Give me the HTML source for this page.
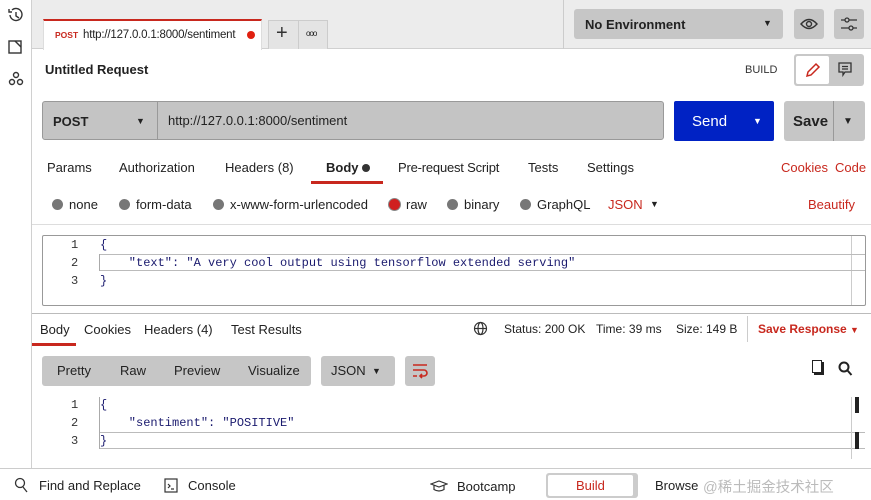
<!DOCTYPE html>
<html><head><style>
*{box-sizing:border-box;margin:0;padding:0}
body{width:871px;height:500px;overflow:hidden;background:#fff;font-family:"Liberation Sans","Noto Sans CJK SC",sans-serif;font-size:13px;color:#222;position:relative}
.a{position:absolute;white-space:nowrap}
.g{background:#c6c6c6;border-radius:3px}
.mono{font-family:"Liberation Mono",monospace;font-size:12px;color:#1a1a6e}
.red{color:#c8281e}
.rd{display:inline-block;width:11px;height:11px;border-radius:50%;background:#777;vertical-align:-1px;margin-right:6px}
</style></head><body>
<!-- top bar -->
<div class="a" style="left:32px;top:0;width:839px;height:49px;background:#ececec;border-bottom:1px solid #d0d0d0"></div>
<div class="a" style="left:0;top:0;width:32px;height:500px;border-right:1px solid #d0d0d0;background:#fff"></div>
<svg class="a" style="left:6px;top:6px" width="20" height="84" viewBox="0 0 20 84" fill="none" stroke="#333" stroke-width="1.4">
<path d="M4 9a6 6 0 1 0 2-5M3 3v3h3M10 6v4l3 2"/>
<rect x="3" y="35" width="12" height="12"/><path d="M9 35v0l6 6"/>
<circle cx="10" cy="69" r="2.5"/><circle cx="6" cy="76" r="2.5"/><circle cx="14" cy="76" r="2.5"/>
</svg>
<div class="a" style="left:43px;top:19px;width:219px;height:31px;background:#fff;border-top:2px solid #c8281e;border-left:1px solid #ddd;border-right:1px solid #ddd"></div>
<div class="a" style="left:55px;top:30px;font-size:8.5px;font-weight:bold;color:#c8281e">POST</div>
<div class="a" style="left:83px;top:29px;font-size:11.5px;letter-spacing:-0.2px">http://127.0.0.1:8000/sentiment</div>
<div class="a" style="left:247px;top:31px;width:8px;height:8px;border-radius:50%;background:#e02010"></div>
<div class="a" style="left:268px;top:20px;width:60px;height:29px;background:#e4e4e4;border:1px solid #ccc;border-bottom:none"></div>
<div class="a" style="left:298px;top:20px;width:1px;height:29px;background:#ccc"></div>
<div class="a" style="left:276px;top:22px;font-size:20px;color:#333">+</div>
<div class="a" style="left:306px;top:29px;font-size:8px;letter-spacing:-1px">ooo</div>
<div class="a" style="left:563px;top:0;width:1px;height:49px;background:#ccc"></div>
<div class="a g" style="left:574px;top:9px;width:209px;height:30px"></div>
<div class="a" style="left:585px;top:17px;font-weight:bold">No Environment</div>
<div class="a" style="left:763px;top:18px;font-size:9px">▼</div>
<div class="a g" style="left:794px;top:9px;width:30px;height:30px"></div>
<svg class="a" style="left:799px;top:15px" width="20" height="18" fill="none" stroke="#333" stroke-width="1.4"><path d="M2 9q8-9 16 0q-8 9-16 0z"/><circle cx="10" cy="9" r="2.5"/></svg>
<div class="a g" style="left:834px;top:9px;width:30px;height:30px"></div>
<svg class="a" style="left:839px;top:14px" width="20" height="20" fill="none" stroke="#333" stroke-width="1.3"><path d="M2 6h16M2 14h16"/><circle cx="8" cy="6" r="2" fill="#c6c6c6"/><circle cx="12" cy="14" r="2" fill="#c6c6c6"/></svg>
<!-- title -->
<div class="a" style="left:45px;top:62px;font-weight:bold;font-size:13px">Untitled Request</div>
<div class="a" style="left:745px;top:64px;font-size:11px;color:#333">BUILD</div>
<div class="a" style="left:794px;top:54px;width:70px;height:32px;background:#c8c8c8;border-radius:3px"></div>
<div class="a" style="left:796px;top:56px;width:33px;height:28px;background:#fff;border-radius:2px"></div>
<svg class="a" style="left:804px;top:61px" width="18" height="18" fill="none" stroke="#c8281e" stroke-width="1.5"><path d="M3 15l1-4 8-8 3 3-8 8z"/></svg>
<svg class="a" style="left:837px;top:61px" width="16" height="16" fill="none" stroke="#333" stroke-width="1.3"><path d="M2 2h12v9H8l-2 3v-3H2z M5 5.5h6M5 8h6"/></svg>
<!-- url row -->
<div class="a" style="left:42px;top:101px;width:622px;height:39px;background:#c4c4c4;border:1px solid #999;border-radius:3px"></div>
<div class="a" style="left:157px;top:102px;width:1px;height:37px;background:#999"></div>
<div class="a" style="left:53px;top:114px;font-weight:bold">POST</div>
<div class="a" style="left:136px;top:116px;font-size:9px">▼</div>
<div class="a" style="left:168px;top:113px">http://127.0.0.1:8000/sentiment</div>
<div class="a" style="left:674px;top:101px;width:100px;height:40px;background:#0022c4;border-radius:2px"></div>
<div class="a" style="left:692px;top:113px;color:#fff;font-size:15px">Send</div>
<div class="a" style="left:753px;top:116px;color:#fff;font-size:9px">▼</div>
<div class="a g" style="left:784px;top:101px;width:81px;height:40px"></div>
<div class="a" style="left:833px;top:101px;width:1px;height:40px;background:#999"></div>
<div class="a" style="left:793px;top:113px;font-weight:bold;font-size:15px">Save</div>
<div class="a" style="left:843px;top:116px;font-size:10px">▼</div>
<!-- tabs -->
<div class="a" style="left:47px;top:160px">Params</div>
<div class="a" style="left:119px;top:160px">Authorization</div>
<div class="a" style="left:225px;top:160px">Headers (8)</div>
<div class="a" style="left:326px;top:160px;font-weight:bold">Body <span style="display:inline-block;width:8px;height:8px;border-radius:50%;background:#333"></span></div>
<div class="a" style="left:311px;top:181px;width:72px;height:3px;background:#c8281e"></div>
<div class="a" style="left:398px;top:160px;letter-spacing:-0.2px">Pre-request Script</div>
<div class="a" style="left:528px;top:160px">Tests</div>
<div class="a" style="left:587px;top:160px">Settings</div>
<div class="a red" style="left:781px;top:160px">Cookies</div>
<div class="a red" style="left:835px;top:160px">Code</div>
<!-- radios -->
<div class="a" style="left:52px;top:197px"><span class="rd"></span>none</div>
<div class="a" style="left:119px;top:197px"><span class="rd"></span>form-data</div>
<div class="a" style="left:213px;top:197px"><span class="rd"></span>x-www-form-urlencoded</div>
<div class="a" style="left:389px;top:197px"><span class="rd" style="background:#d02020;box-shadow:0 0 0 1px #888"></span>raw</div>
<div class="a" style="left:447px;top:197px"><span class="rd"></span>binary</div>
<div class="a" style="left:520px;top:197px"><span class="rd"></span>GraphQL</div>
<div class="a red" style="left:608px;top:197px">JSON</div>
<div class="a" style="left:650px;top:199px;font-size:9px">▼</div>
<div class="a red" style="left:808px;top:197px">Beautify</div>
<div class="a" style="left:32px;top:224px;width:839px;height:1px;background:#ddd"></div>
<!-- editor -->
<div class="a" style="left:42px;top:235px;width:824px;height:71px;border:1px solid #999;border-radius:2px"></div>
<div class="a" style="left:851px;top:236px;width:1px;height:69px;background:#ccc"></div>
<div class="a" style="left:99px;top:254px;width:766px;height:17px;border-top:1px solid #bbb;border-bottom:1px solid #bbb"></div>
<div class="a" style="left:99px;top:254px;width:1px;height:17px;background:#aaa"></div>
<div class="a mono" style="left:71px;top:236px;line-height:18px;color:#333">1<br>2<br>3</div>
<div class="a mono" style="left:100px;top:236px;line-height:18px">{<br>&nbsp;&nbsp;&nbsp;&nbsp;"text": "A very cool output using tensorflow extended serving"<br>}</div>
<div class="a" style="left:32px;top:313px;width:839px;height:1px;background:#bbb"></div>
<!-- response tabs -->
<div class="a" style="left:40px;top:322px">Body</div>
<div class="a" style="left:32px;top:343px;width:44px;height:3px;background:#c8281e"></div>
<div class="a" style="left:84px;top:322px">Cookies</div>
<div class="a" style="left:144px;top:322px">Headers (4)</div>
<div class="a" style="left:231px;top:322px">Test Results</div>
<svg class="a" style="left:473px;top:321px" width="15" height="15" fill="none" stroke="#333" stroke-width="1.2"><circle cx="7.5" cy="7.5" r="6"/><ellipse cx="7.5" cy="7.5" rx="2.5" ry="6"/><path d="M1.5 7.5h12"/></svg>
<div class="a" style="left:504px;top:322px;font-size:12px">Status: 200 OK</div>
<div class="a" style="left:596px;top:322px;font-size:12px">Time: 39 ms</div>
<div class="a" style="left:676px;top:322px;font-size:12px">Size: 149 B</div>
<div class="a" style="left:747px;top:316px;width:1px;height:26px;background:#ccc"></div>
<div class="a red" style="left:758px;top:322px;font-weight:bold;font-size:12px">Save Response <span style="font-size:9px">▼</span></div>
<div class="a g" style="left:42px;top:356px;width:269px;height:30px"></div>
<div class="a" style="left:57px;top:363px">Pretty</div>
<div class="a" style="left:120px;top:363px">Raw</div>
<div class="a" style="left:174px;top:363px">Preview</div>
<div class="a" style="left:248px;top:363px">Visualize</div>
<div class="a g" style="left:321px;top:356px;width:74px;height:30px"></div>
<div class="a" style="left:331px;top:363px">JSON</div>
<div class="a" style="left:372px;top:366px;font-size:9px">▼</div>
<div class="a g" style="left:405px;top:356px;width:30px;height:30px"></div>
<svg class="a" style="left:411px;top:362px" width="18" height="18" fill="none" stroke="#c8281e" stroke-width="1.6"><path d="M2 3h14M2 8h11a3 3 0 0 1 0 6H9M11 12l-2 2 2 2M2 14h4"/></svg>
<div class="a" style="left:814px;top:362px;width:10px;height:13px;background:#222"></div>
<div class="a" style="left:812px;top:360px;width:10px;height:13px;border:1.5px solid #222;background:#fff"></div>
<svg class="a" style="left:838px;top:361px" width="15" height="16" fill="none" stroke="#222" stroke-width="2"><circle cx="6" cy="6" r="4.5"/><path d="M9.5 9.5l4 4.5"/></svg>
<!-- response editor -->
<div class="a" style="left:99px;top:432px;width:766px;height:17px;border-top:1px solid #bbb;border-bottom:1px solid #bbb"></div>
<div class="a" style="left:99px;top:397px;width:1px;height:52px;background:#aaa"></div>
<div class="a" style="left:851px;top:397px;width:1px;height:62px;background:#ccc"></div>
<div class="a" style="left:855px;top:397px;width:4px;height:16px;background:#222"></div>
<div class="a" style="left:855px;top:432px;width:4px;height:17px;background:#222"></div>
<div class="a mono" style="left:71px;top:396px;line-height:18px;color:#333">1<br>2<br>3</div>
<div class="a mono" style="left:100px;top:396px;line-height:18px">{<br>&nbsp;&nbsp;&nbsp;&nbsp;"sentiment": "POSITIVE"<br>}</div>
<!-- footer -->
<div class="a" style="left:0;top:468px;width:871px;height:32px;background:#fff;border-top:1px solid #ccc"></div>
<svg class="a" style="left:14px;top:477px" width="14" height="16" fill="none" stroke="#333" stroke-width="1.3"><circle cx="6" cy="6" r="4.5"/><path d="M9 10l4 5"/></svg>
<div class="a" style="left:39px;top:478px">Find and Replace</div>
<svg class="a" style="left:164px;top:478px" width="14" height="15" fill="none" stroke="#333" stroke-width="1.2"><rect x="1" y="1" width="12" height="13"/><path d="M4 6l2 2-2 2M7 11h3"/></svg>
<div class="a" style="left:188px;top:478px">Console</div>
<svg class="a" style="left:430px;top:479px" width="18" height="14" fill="none" stroke="#333" stroke-width="1.2"><path d="M1 5l8-3 8 3-8 3z M4 6.5v4q5 3 10 0v-4"/></svg>
<div class="a" style="left:457px;top:479px">Bootcamp</div>
<div class="a" style="left:546px;top:473px;width:92px;height:25px;background:#ccc;border-radius:3px"></div>
<div class="a" style="left:548px;top:475px;width:85px;height:21px;background:#fff;border-radius:2px"></div>
<div class="a red" style="left:576px;top:478px">Build</div>
<div class="a" style="left:655px;top:478px">Browse</div>
<div class="a" style="left:703px;top:476px;font-size:14.5px;color:#bbb">@稀土掘金技术社区</div>
</body></html>
